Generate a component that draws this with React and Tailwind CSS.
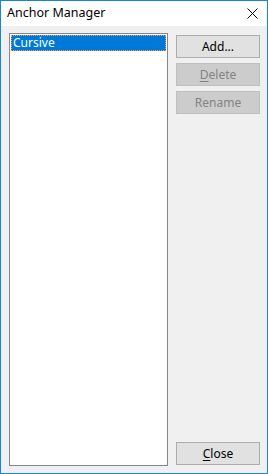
import React from "react";

function Btn({ children, disabled, className = "" }) {
  return (
    <div
      className={
        "h-[23px] w-full flex items-center justify-center border text-[12px] leading-none " +
        (disabled
          ? "bg-[#cccccc] border-[#bfbfbf] text-[#838383] "
          : "bg-[#e1e1e1] border-[#adadad] text-black ") +
        className
      }
    >
      {children}
    </div>
  );
}

export default function App() {
  return (
    <div
      className="w-[268px] h-[474px] border border-[#1883d7] flex flex-col bg-[#f0f0f0] overflow-hidden"
      style={{ fontFamily: '"Noto Sans", "Liberation Sans", sans-serif' }}
    >
      <div className="h-[25px] bg-white flex items-center justify-between pl-[6px] pr-[9px] shrink-0">
        <span className="text-[12.5px] text-black leading-none">Anchor Manager</span>
        <svg width="11" height="11" viewBox="0 0 11 11" className="block">
          <path d="M0.5 0.5 L10.5 10.5 M10.5 0.5 L0.5 10.5" stroke="#000" strokeWidth="1" />
        </svg>
      </div>
      <div className="flex-1 flex pl-[8px] pr-[7px] pt-[7px] pb-[7px]">
        <div className="w-[159px] border border-[#828790] bg-white p-[1px]">
          <div className="h-[16px] bg-[#0078d7] border border-dotted border-[#f7a23b] flex items-center pl-[1px] text-white text-[12px] leading-none">
            Cursive
          </div>
        </div>
        <div className="w-[84px] ml-[8px] flex flex-col pt-[2px] gap-[5px] pb-[1px]">
          <Btn>Add...</Btn>
          <Btn disabled>
            <span className="underline underline-offset-2">D</span>elete
          </Btn>
          <Btn disabled>Rename</Btn>
          <Btn className="mt-auto">
            <span className="underline underline-offset-2">C</span>lose
          </Btn>
        </div>
      </div>
    </div>
  );
}
